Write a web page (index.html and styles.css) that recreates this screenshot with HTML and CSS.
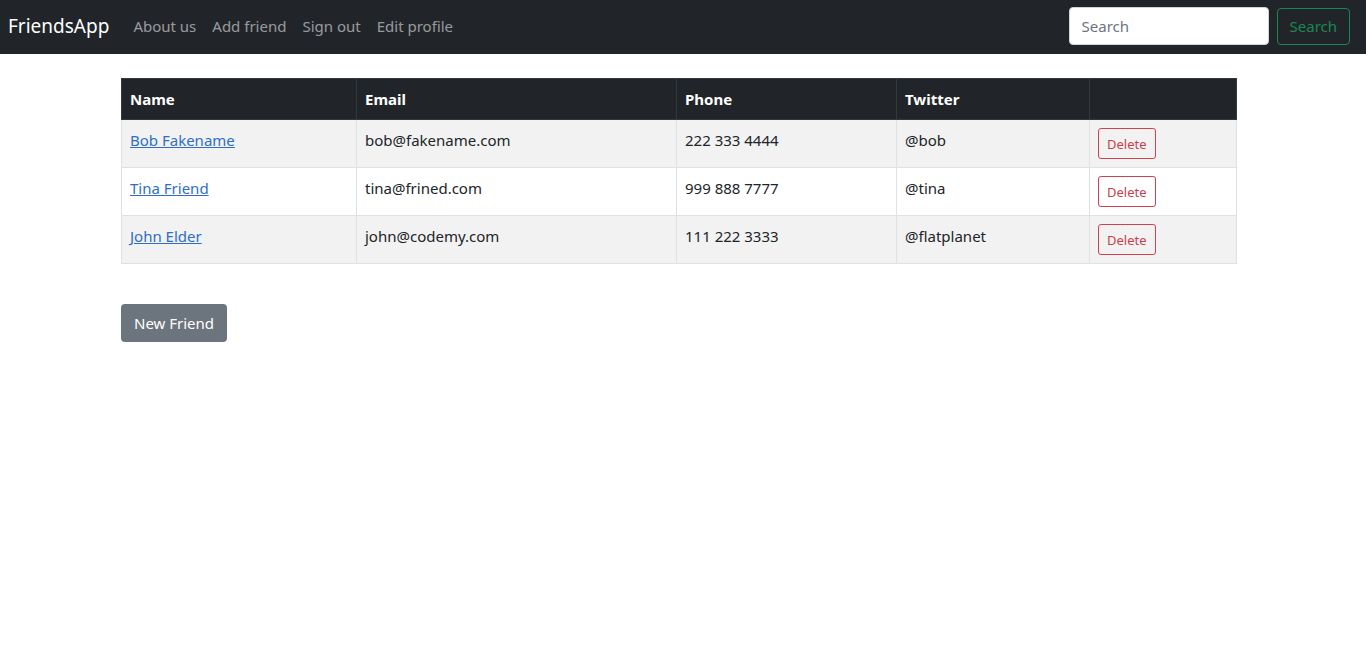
FILE: index.html
```html
<!DOCTYPE html>
<html>
    <head>
        <title>FriendsApp</title>
        <link rel="stylesheet" href="styles.css">
    </head>
    <body>
        <nav class="navbar">
            <a class="brand" href="#">FriendsApp</a>
            <div class="nav-links">
                <a href="#">About us</a>
                <a href="#">Add friend</a>
                <a href="#">Sign out</a>
                <a href="#">Edit profile</a>
            </div>
            <form class="search-form">
                <input class="search-input" type="search" placeholder="Search">
                <button class="search-button" type="submit">Search</button>
            </form>
        </nav>

        <div class="container">
            <table class="friends">
                <thead>
                    <tr>
                        <th class="col-name">Name</th>
                        <th class="col-email">Email</th>
                        <th class="col-phone">Phone</th>
                        <th class="col-twitter">Twitter</th>
                        <th></th>
                    </tr>
                </thead>
                <tbody>
                    <tr>
                        <td><a href="#">Bob Fakename</a></td>
                        <td>bob@fakename.com</td>
                        <td>222 333 4444</td>
                        <td>@bob</td>
                        <td><button class="delete">Delete</button></td>
                    </tr>
                    <tr>
                        <td><a href="#">Tina Friend</a></td>
                        <td>tina@frined.com</td>
                        <td>999 888 7777</td>
                        <td>@tina</td>
                        <td><button class="delete">Delete</button></td>
                    </tr>
                    <tr>
                        <td><a href="#">John Elder</a></td>
                        <td>john@codemy.com</td>
                        <td>111 222 3333</td>
                        <td>@flatplanet</td>
                        <td><button class="delete">Delete</button></td>
                    </tr>
                </tbody>
            </table>

            <button class="new-friend">New Friend</button>
        </div>
    </body>
</html>
```

FILE: styles.css
```css
body{
    margin: 0;
    font-family: "Segoe UI", "Noto Sans", sans-serif;
    font-size: 15px;
    color: #212529;
    background-color: white;
}
.navbar{
    display: flex;
    align-items: center;
    height: 54px;
    padding: 0 16px 2px 8px;
    box-sizing: border-box;
    background-color: #212529;
}
.brand{
    color: white;
    font-size: 19px;
    text-decoration: none;
    margin-right: 16px;
}
.nav-links{
    display: flex;
    flex: 1;
}
.nav-links a{
    color: rgba(255,255,255,0.55);
    text-decoration: none;
    padding: 8px;
}
.search-form{
    display: flex;
    align-items: center;
    gap: 8px;
}
.search-input{
    width: 200px;
    height: 38px;
    box-sizing: border-box;
    padding: 6px 12px;
    border: 1px solid #ced4da;
    border-radius: 4px;
    font-family: inherit;
    font-size: 15px;
}
.search-input::placeholder{
    color: #6c757d;
}
.search-button{
    height: 37px;
    padding: 6px 12px;
    background-color: transparent;
    border: 1px solid #198754;
    border-radius: 4px;
    color: #198754;
    font-family: inherit;
    font-size: 15px;
}
.container{
    width: 1116px;
    margin: 24px 0 0 121px;
}
.friends{
    width: 100%;
    border-collapse: collapse;
    margin-bottom: 40px;
}
.friends th,
.friends td{
    text-align: left;
    vertical-align: top;
    padding: 8px;
    border: 1px solid #dee2e6;
    line-height: 24px;
}
.friends th{
    background-color: #212529;
    border-color: #32383e;
    color: white;
    font-weight: bold;
}
.col-name{ width: 218px; }
.col-email{ width: 303px; }
.col-phone{ width: 203px; }
.col-twitter{ width: 176px; }
.friends tbody tr:nth-child(odd){
    background-color: #f2f2f2;
}
.friends a{
    color: #2f6fc2;
}
.delete{
    height: 31px;
    padding: 4px 8px;
    background-color: transparent;
    border: 1px solid #d04150;
    border-radius: 3px;
    color: #c9404d;
    font-family: inherit;
    font-size: 13px;
}
.new-friend{
    height: 38px;
    padding: 6px 13px;
    background-color: #6c757d;
    border: none;
    border-radius: 4px;
    color: white;
    font-family: inherit;
    font-size: 15px;
}
```
